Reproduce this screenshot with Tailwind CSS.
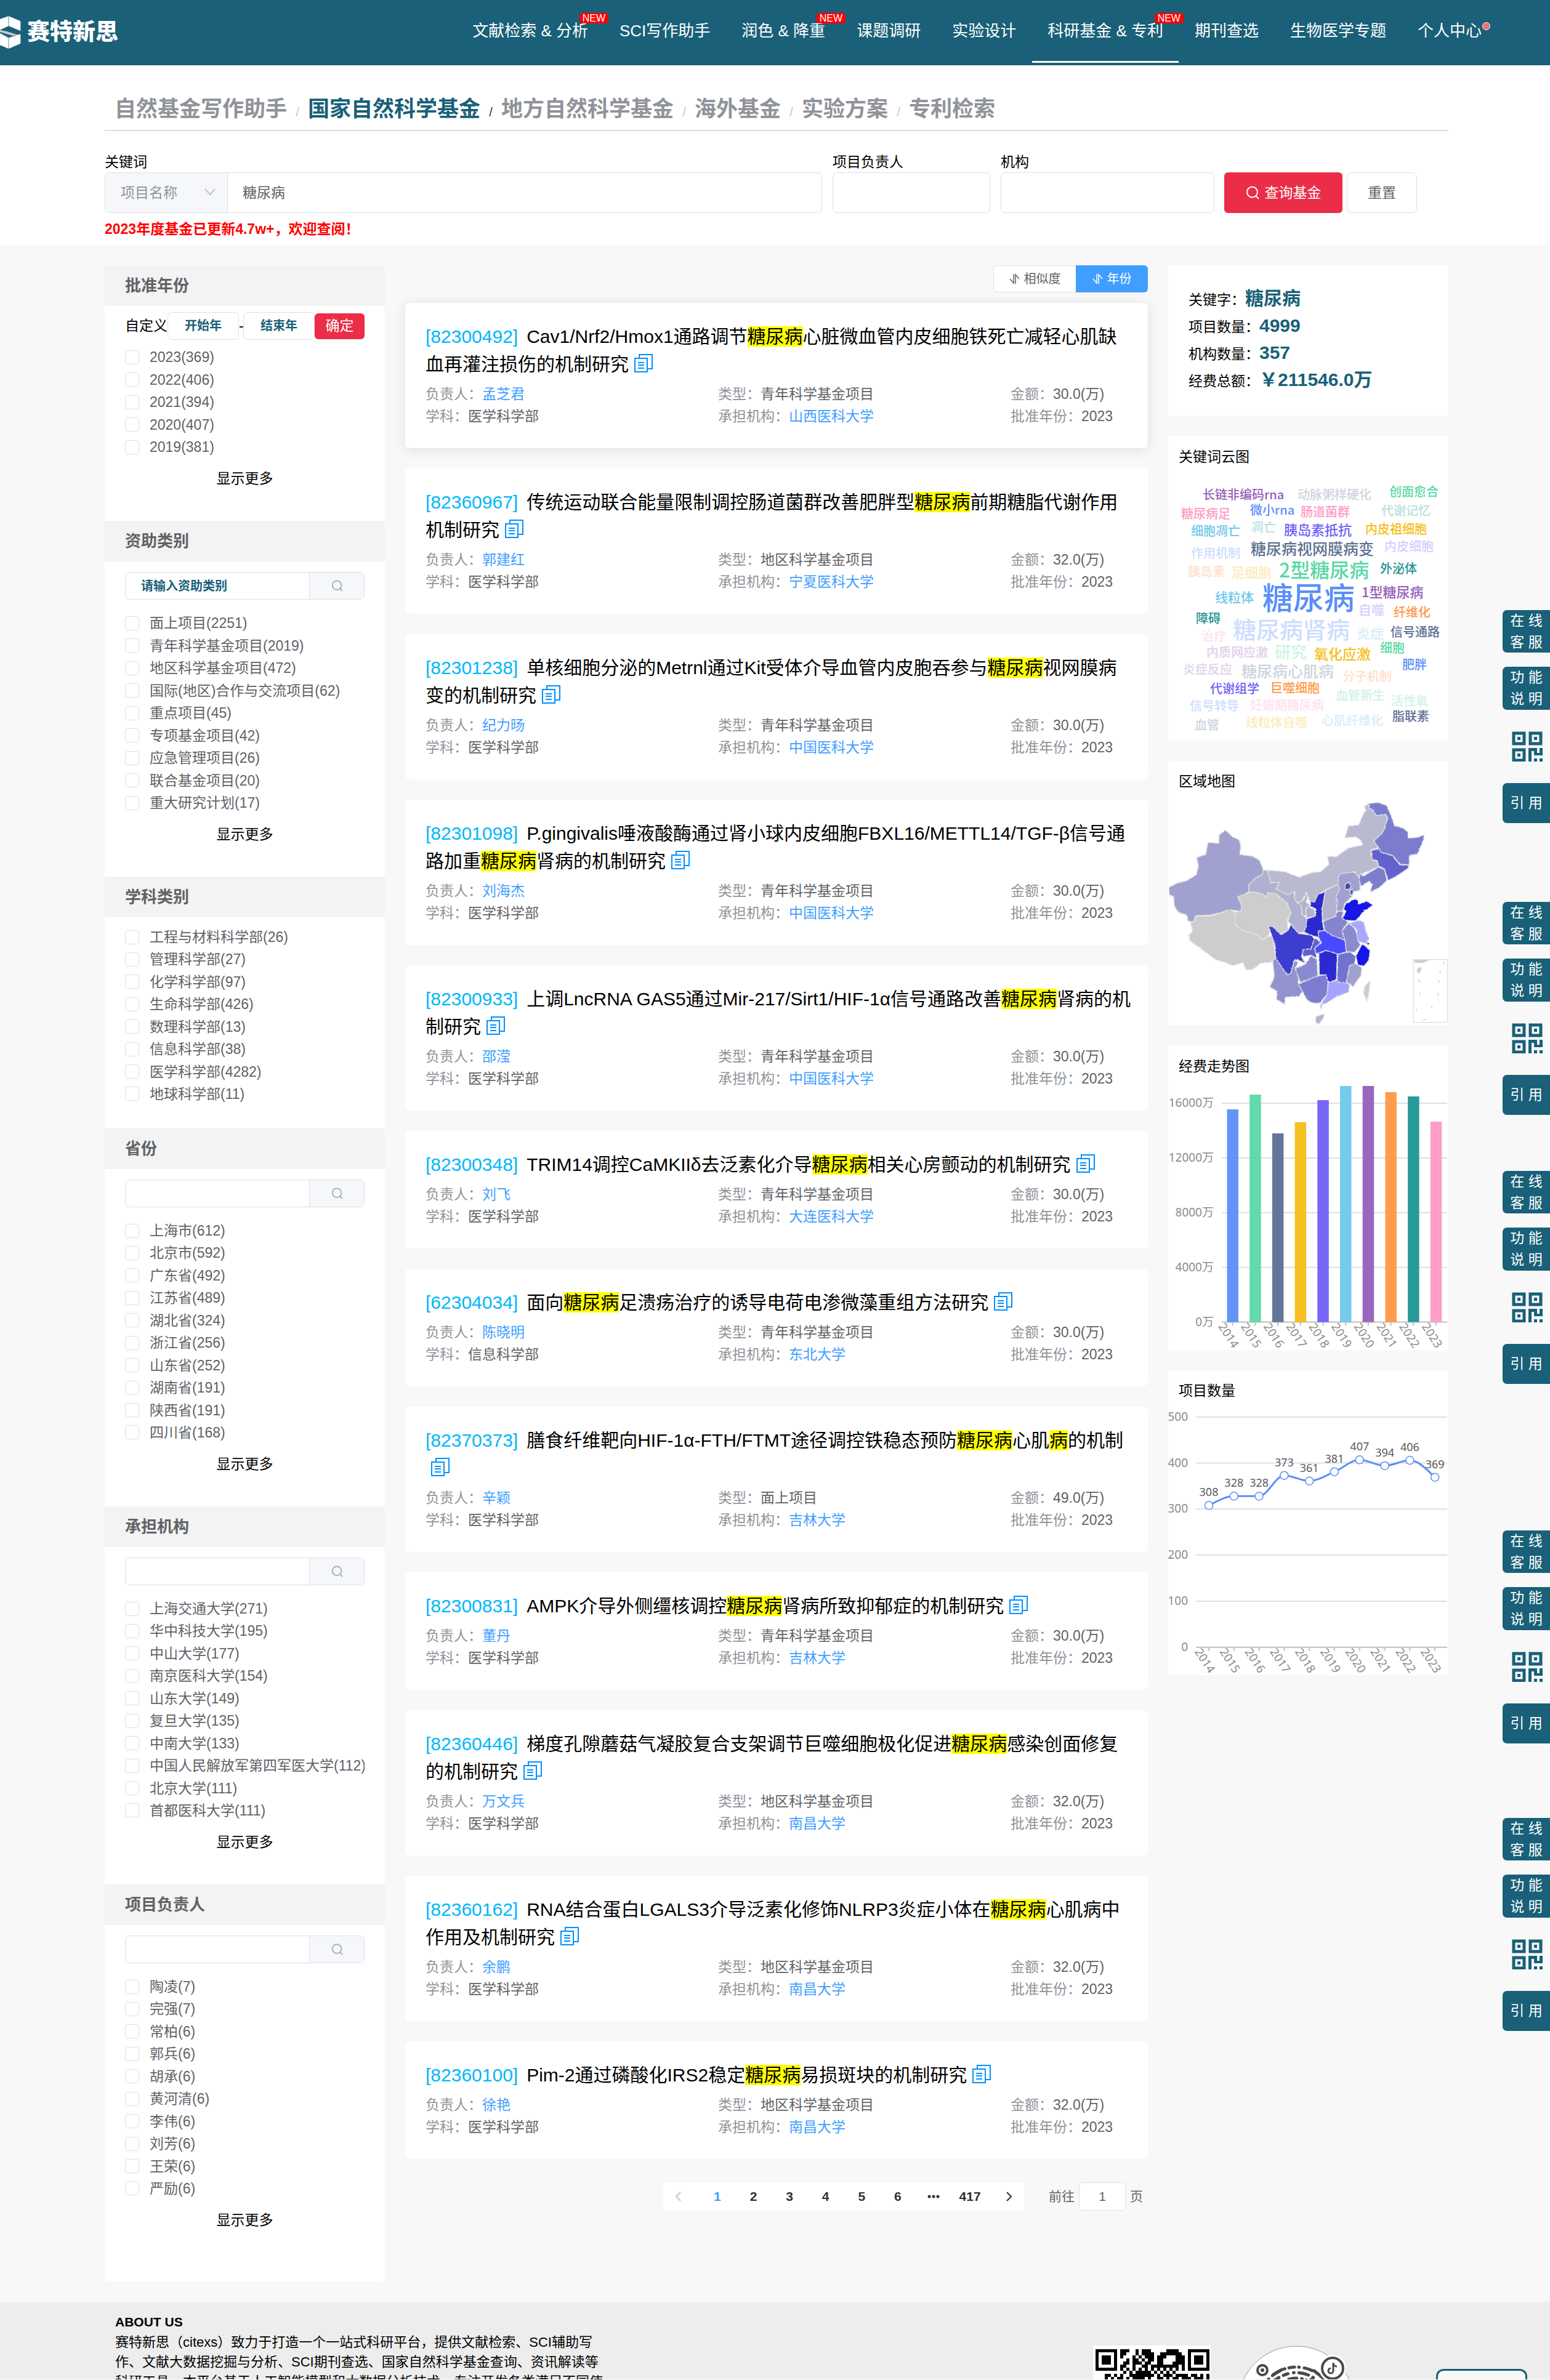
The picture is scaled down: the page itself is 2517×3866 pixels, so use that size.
<!DOCTYPE html>
<html lang="zh-CN">
<head>
<meta charset="utf-8">
<meta name="viewport" content="width=device-width, initial-scale=1">
<title>国家自然科学基金 - 赛特新思</title>
<script src="https://cdn.jsdelivr.net/npm/@tailwindcss/browser@4"></script>
</head>
<body class="relative overflow-x-hidden bg-[#f8f8f8] font-['Liberation_Sans','Noto_Sans_CJK_SC',sans-serif] text-[23px] text-black">

<header class="flex h-[106px] items-stretch justify-between bg-[#196078] pr-[86px] text-white">
  <a href="#" class="flex items-center gap-[10px] text-[37px] font-black leading-[40px]">
    <svg class="h-[54px] w-[34px] shrink-0" viewBox="0 0 102 162" aria-hidden="true">
      <path d="M0 15 41 1v48L0 68zM43 1l57 24v48L43 49z" fill="#fff"/>
      <path d="M0 68 100 88 100 134 43 159V106L0 92z" fill="#fff"/>
      <path d="M0 68 43 52 85 74 100 78v10L43 106 0 84z" fill="#196078"/>
      <path d="M0 68 36 76 88 92 62 96 0 78z" fill="#c9cdd0"/>
      <path d="M0 92 41 106v53L0 142z" fill="#fff"/>
    </svg>
    <span class="whitespace-nowrap">赛特新思</span>
  </a>
  <nav id="nav" class="flex gap-px text-[26px] leading-[100px]"></nav>
</header>

<section class="bg-white pt-[45px] pr-[165px] pl-[170px]">
  <nav id="crumbs" class="flex h-[62px] border-b-2 border-[#d9dfe3] pl-[16px] text-[35px] leading-[52px] font-bold whitespace-nowrap text-[#909399]"></nav>
  <form class="flex items-end pt-[33px] pr-[51px]">
    <div class="min-w-0 flex-1">
      <label for="kw" class="block leading-[34px]">关键词</label>
      <div class="flex h-[66px] overflow-hidden rounded-[7px] border border-[#dcdfe6]">
        <div class="relative w-[199px] shrink-0 border-r border-[#dcdfe6] bg-[#f5f7fa]">
          <select aria-label="检索字段" class="h-full w-full appearance-none pl-[25px] text-[#909399]"><option>项目名称</option></select>
          <svg class="pointer-events-none absolute top-[24px] right-[18px] h-[14px] w-[20px]" viewBox="0 0 20 14" fill="none" stroke="#c0c4cc" stroke-width="2"><path d="M2 2 10 11 18 2"/></svg>
        </div>
        <input id="kw" value="糖尿病" class="min-w-0 flex-1 px-[24px] text-[#606266]">
      </div>
    </div>
    <div class="ml-[17px] w-[256px]">
      <label for="leader" class="block leading-[34px]">项目负责人</label>
      <input id="leader" class="block h-[66px] w-full rounded-[7px] border border-[#dcdfe6]">
    </div>
    <div class="ml-[17px] w-[347px]">
      <label for="org" class="block leading-[34px]">机构</label>
      <input id="org" class="block h-[66px] w-full rounded-[7px] border border-[#dcdfe6]">
    </div>
    <button type="button" class="ml-[16px] flex h-[66px] w-[192px] items-center justify-center gap-[9px] rounded-[6px] bg-[#eb2d47] text-white">
      <svg class="h-[22px] w-[22px]" viewBox="0 0 22 22" fill="none" stroke="currentColor" stroke-width="2"><circle cx="10.500" cy="10" r="8.500"/><path d="m16 16 5 5"/></svg>查询基金</button>
    <button type="button" class="ml-[7px] h-[66px] w-[114px] rounded-[7px] border border-[#dcdfe6] bg-white text-[#606266]">重置</button>
  </form>
  <p class="leading-[52px] font-bold text-[#ff0000]">2023年度基金已更新4.7w+，欢迎查阅！</p>
</section>

<main class="flex items-start gap-[33px] pt-[33px] pr-[165px] pb-[33px] pl-[170px]">
  <aside id="filters" class="w-[455px] shrink-0 overflow-hidden rounded-b-[7px] bg-white pb-[31px]"></aside>

  <div class="min-w-0 flex-1">
    <div class="mb-[17px] flex h-[44px] justify-end text-[20px]">
      <button type="button" class="flex w-[134px] items-center justify-center gap-[7px] rounded-l-[6px] border border-r-0 border-[#dcdfe6] bg-white text-[#606266]">
        <svg class="h-[18px] w-[17px]" viewBox="0 0 17 18" fill="none" stroke="currentColor" stroke-width="1.500"><path d="M7 1v15L1 9M10 17V2l6 7"/></svg>相似度</button>
      <button type="button" class="flex w-[117px] items-center justify-center gap-[7px] rounded-r-[6px] bg-[#409eff] text-white">
        <svg class="h-[18px] w-[17px]" viewBox="0 0 17 18" fill="none" stroke="currentColor" stroke-width="1.500"><path d="M7 1v15L1 9M10 17V2l6 7"/></svg>年份</button>
    </div>
    <div id="results" class="flex flex-col gap-[33px]"></div>
    <nav aria-label="分页" class="mt-[38px] flex h-[46px] items-center justify-end pr-[8px] text-[21px] text-[#606266]">
      <div class="grid h-full w-[586px] grid-cols-10 items-center bg-white font-bold text-[#303133]">
        <button type="button" aria-label="上一页" class="flex justify-start pl-[19px] text-[#c0c4cc]"><svg class="h-[16px] w-[10px]" viewBox="0 0 10 16" fill="none" stroke="currentColor" stroke-width="2"><path d="M9 1 2 8l7 7"/></svg></button>
        <button type="button" class="text-[#409eff]">1</button>
        <button type="button">2</button>
        <button type="button">3</button>
        <button type="button">4</button>
        <button type="button">5</button>
        <button type="button">6</button>
        <button type="button" aria-label="更多页" class="flex justify-center"><svg class="h-[6px] w-[20px]" viewBox="0 0 20 6" fill="currentColor"><circle cx="3" cy="3" r="2.500"/><circle cx="10" cy="3" r="2.500"/><circle cx="17" cy="3" r="2.500"/></svg></button>
        <button type="button">417</button>
        <button type="button" aria-label="下一页" class="flex justify-end pr-[19px]"><svg class="h-[16px] w-[10px]" viewBox="0 0 10 16" fill="none" stroke="currentColor" stroke-width="2"><path d="m1 1 7 7-7 7"/></svg></button>
      </div>
      <label for="page" class="ml-[40px]">前往</label>
      <input id="page" value="1" class="mx-[7px] h-[46px] w-[76px] rounded-[6px] border border-[#dcdfe6] bg-white text-center">
      <span>页</span>
    </nav>
  </div>

  <aside class="flex w-[455px] shrink-0 flex-col">
    <dl class="h-[244px] bg-white pt-[31px] pl-[33px] leading-[45px]">
      <div class="flex h-[44px] items-baseline"><dt>关键字：</dt><dd class="text-[30px] font-bold text-[#196078]">糖尿病</dd></div>
      <div class="flex h-[44px] items-baseline"><dt>项目数量：</dt><dd class="text-[30px] font-bold text-[#196078]">4999</dd></div>
      <div class="flex h-[44px] items-baseline"><dt>机构数量：</dt><dd class="text-[30px] font-bold text-[#196078]">357</dd></div>
      <div class="flex h-[44px] items-baseline"><dt>经费总额：</dt><dd class="text-[30px] font-bold text-[#196078]">￥211546.0万</dd></div>
    </dl>
    <section class="mt-[33px] bg-white">
      <h2 class="h-[64px] pt-[16px] pl-[17px] leading-[36px]">关键词云图</h2>
      <svg id="cloud" class="block w-full font-['Noto_Sans_CJK_SC',sans-serif] font-medium" viewBox="0 64 455 431" role="img" aria-label="关键词云图"></svg>
    </section>
    <section class="mt-[33px] bg-white">
      <h2 class="h-[54px] pt-[15px] pl-[17px] leading-[36px]">区域地图</h2>
      <svg id="map" class="block w-full" viewBox="21 0 1365 1125" role="img" aria-label="区域地图">
        <defs><filter id="coast" x="0" y="0" width="1" height="1"><feTurbulence type="fractalNoise" baseFrequency="0.16" numOctaves="3" seed="4"/><feDisplacementMap in="SourceGraphic" scale="9" xChannelSelector="R" yChannelSelector="G"/></filter></defs>
      </svg>
    </section>
    <section class="mt-[34px] bg-white">
      <h2 class="h-[51px] pt-[15px] pl-[17px] leading-[36px]">经费走势图</h2>
      <svg id="bars" class="block w-full font-['Noto_Sans','Noto_Sans_CJK_SC',sans-serif]" viewBox="0 51 455 443" role="img" aria-label="经费走势图"></svg>
    </section>
    <section class="mt-[33px] bg-white">
      <h2 class="h-[51px] pt-[15px] pl-[17px] leading-[36px]">项目数量</h2>
      <svg id="line" class="block w-full font-['Noto_Sans',sans-serif]" viewBox="0 51 455 444" role="img" aria-label="项目数量"></svg>
    </section>
  </aside>
</main>

<footer class="flex h-[126px] items-start overflow-hidden bg-[#ededed] pr-[312px] pl-[187px]">
  <div class="w-[792px] pt-[16px] text-[22px] leading-[32px]">
    <h2 class="text-[21px] leading-[34px] font-bold">ABOUT US</h2>
    <p>赛特新思（citexs）致力于打造一个一站式科研平台，提供文献检索、SCI辅助写作、文献大数据挖掘与分析、SCI期刊查选、国家自然科学基金查询、资讯解读等科研工具。本平台基于人工智能模型和大数据分析技术，专注开发各类满足不同使</p>
  </div>
  <div class="ml-auto flex gap-[43px] pt-[71px]">
    <svg id="qr" class="h-[191px] w-[191px] bg-white" viewBox="0 0 191 191" role="img" aria-label="微信二维码"></svg>
    <svg class="h-[191px] w-[196px]" viewBox="0 0 196 191" role="img" aria-label="抖音二维码">
      <circle cx="96" cy="96" r="95" fill="#fff" stroke="#999"/>
      <g fill="none" stroke="#4a4a4a" stroke-width="5" stroke-linecap="round">
        <circle cx="96" cy="96" r="61" stroke-dasharray="9 7 1 8 14 8 1 7"/>
        <circle cx="96" cy="96" r="52" stroke-dasharray="1 8 16 8 1 9 8 9"/>
        <circle cx="96" cy="96" r="43" stroke-dasharray="13 8 1 7 1 8"/>
        <circle cx="96" cy="96" r="34" stroke-dasharray="1 7 10 8"/>
        <circle cx="96" cy="96" r="25" stroke-dasharray="6 7"/>
        <path d="m59 47 14-8M58 58l10-6M125 41l10 8M120 55l8 5"/>
      </g>
      <circle cx="41" cy="40" r="14" fill="#fff"/><circle cx="41" cy="40" r="8" fill="none" stroke="#4a4a4a" stroke-width="4"/><circle cx="41" cy="40" r="3" fill="#4a4a4a"/>
      <circle cx="155" cy="37" r="22" fill="#fff"/><circle cx="155" cy="37" r="17" fill="none" stroke="#4a4a4a" stroke-width="4"/>
      <path d="M156 28v13a4 4 0 1 1-4-4M156 29c1 4 3 5 6 5" fill="none" stroke="#4a4a4a" stroke-width="3"/>
    </svg>
  </div>
</footer>

<div id="tools" class="absolute top-[991px] right-0 w-[77px] text-white"></div>
<div class="absolute right-[37px] bottom-0 h-[17px] w-[148px] rounded-t-[12px] border-[3px] border-b-0 border-[#196078] bg-[#f8f8f8]"></div>

<script>
const put = (id, html) => document.getElementById(id).insertAdjacentHTML('beforeend', html);

/* top navigation */
put('nav', [['文献检索 & 分析', 1], ['SCI写作助手'], ['润色 & 降重', 1], ['课题调研'], ['实验设计'], ['科研基金 & 专利', 1, 1], ['期刊查选'], ['生物医学专题'], ['个人中心', 2]]
  .map(([t, mark, on]) => `<a href="#" class="relative block h-[102px] px-[25px] whitespace-nowrap ${on ? 'border-b-[3px] border-white' : ''}">${t.replace('&', '&amp;')}${
    mark === 1 ? '<span class="absolute top-[21px] right-[-8px] rounded-[5px] bg-[#ff0000] px-[5px] text-[16px] leading-[17px]">NEW</span>' :
    mark === 2 ? '<span class="absolute top-[36px] right-[11px] h-[13px] w-[13px] rounded-full border border-white bg-[#f56c6c]"></span>' : ''}</a>`).join(''));

put('crumbs', ['自然基金写作助手', '国家自然科学基金', '地方自然科学基金', '海外基金', '实验方案', '专利检索']
  .map((t, i) => `${i ? `<span class="w-[34px] pt-[5px] text-center text-[20px] font-normal ${i === 2 ? 'text-[#303133]' : 'text-[#c0c4cc]'}">/</span>` : ''}<a href="#" class="${i === 1 ? 'text-[#196078]' : ''}">${t}</a>`).join(''));

/* filter sidebar */
const filters = [
  { t: '批准年份', h: 'h-[182px]', years: 1, more: 1, items: '2023(369)|2022(406)|2021(394)|2020(407)|2019(381)' },
  { t: '资助类别', h: 'h-[328px]', search: 1, ph: '请输入资助类别', more: 1, items: '面上项目(2251)|青年科学基金项目(2019)|地区科学基金项目(472)|国际(地区)合作与交流项目(62)|重点项目(45)|专项基金项目(42)|应急管理项目(26)|联合基金项目(20)|重大研究计划(17)' },
  { t: '学科类别', h: 'h-[291px]', items: '工程与材料科学部(26)|管理科学部(27)|化学科学部(97)|生命科学部(426)|数理科学部(13)|信息科学部(38)|医学科学部(4282)|地球科学部(11)' },
  { t: '省份', h: 'h-[364px]', search: 1, more: 1, items: '上海市(612)|北京市(592)|广东省(492)|江苏省(489)|湖北省(324)|浙江省(256)|山东省(252)|湖南省(191)|陕西省(191)|四川省(168)' },
  { t: '承担机构', h: 'h-[364px]', search: 1, more: 1, items: '上海交通大学(271)|华中科技大学(195)|中山大学(177)|南京医科大学(154)|山东大学(149)|复旦大学(135)|中南大学(133)|中国人民解放军第四军医大学(112)|北京大学(111)|首都医科大学(111)' },
  { t: '项目负责人', h: 'h-[364px]', search: 1, more: 1, items: '陶凌(7)|完强(7)|常柏(6)|郭兵(6)|胡承(6)|黄河清(6)|李伟(6)|刘芳(6)|王荣(6)|严励(6)' },
];
const yearInput = t => `<input aria-label="${t}" placeholder="${t}" class="h-[45px] w-[116px] rounded-[7px] border border-[#dcdfe6] text-center text-[20px] font-bold placeholder:text-[#196078]">`;
put('filters', filters.map(f => `<section>
  <h2 class="bg-[#f3f3f3] pl-[33px] text-[26px] leading-[66px] font-bold text-[#606266]">${f.t}</h2>
  <div class="px-[33px] ${f.more ? 'pb-[51px]' : 'pb-[38px]'}">
  ${f.years ? `<div class="flex items-center pt-[10px] pb-[10px] whitespace-nowrap"><span class="w-[69px]">自定义</span>${yearInput('开始年')}<span class="w-[7px] text-center leading-[45px]">-</span>${yearInput('结束年')}<button type="button" class="h-[42px] w-[81px] rounded-[6px] bg-[#eb2d47] text-white">确定</button></div>` : ''}
  ${f.search ? `<div class="mt-[17px] mb-[20px] flex h-[45px] overflow-hidden rounded-[7px] border border-[#dcdfe6]"><input aria-label="${f.t}" placeholder="${f.ph || ''}" class="min-w-0 flex-1 pl-[25px] text-[20px] font-bold placeholder:text-[#196078]"><button type="button" aria-label="搜索${f.t}" class="flex w-[89px] items-center justify-center border-l border-[#dcdfe6] bg-[#f5f7fa]"><svg class="h-[19px] w-[19px]" viewBox="0 0 22 22" fill="none" stroke="#a3a7ae" stroke-width="2"><circle cx="10.500" cy="10" r="8.500"/><path d="m16 16 5 5"/></svg></button></div>` : ''}
  <ul class="flex flex-col justify-between ${f.h} ${!f.years && !f.search ? 'mt-[14px]' : ''}">${f.items.split('|').map(s => `<li><label class="flex items-center gap-[17px] overflow-hidden leading-[36px] whitespace-nowrap text-[#606266]"><input type="checkbox" class="h-[23px] w-[23px] shrink-0 appearance-none rounded-[4px] border border-[#dcdfe6] bg-white">${s}</label></li>`).join('')}</ul>
  ${f.more ? '<button type="button" class="mx-auto mt-[15px] block leading-[36px]">显示更多</button>' : ''}
  </div></section>`).join(''));

/* result cards: code, title (* marks the highlighted word), leader, type, amount, subject, institution */
const K = '*糖尿病*';
const rows = [
  ['82300492', `Cav1/Nrf2/Hmox1通路调节${K}心脏微血管内皮细胞铁死亡减轻心肌缺血再灌注损伤的机制研究`, '孟芝君', '青年科学基金项目', '30.0', '医学科学部', '山西医科大学'],
  ['82360967', `传统运动联合能量限制调控肠道菌群改善肥胖型${K}前期糖脂代谢作用机制研究`, '郭建红', '地区科学基金项目', '32.0', '医学科学部', '宁夏医科大学'],
  ['82301238', `单核细胞分泌的Metrnl通过Kit受体介导血管内皮胞吞参与${K}视网膜病变的机制研究`, '纪力旸', '青年科学基金项目', '30.0', '医学科学部', '中国医科大学'],
  ['82301098', `P.gingivalis唾液酸酶通过肾小球内皮细胞FBXL16/METTL14/TGF-β信号通路加重${K}肾病的机制研究`, '刘海杰', '青年科学基金项目', '30.0', '医学科学部', '中国医科大学'],
  ['82300933', `上调LncRNA GAS5通过Mir-217/Sirt1/HIF-1α信号通路改善${K}肾病的机制研究`, '邵滢', '青年科学基金项目', '30.0', '医学科学部', '中国医科大学'],
  ['82300348', `TRIM14调控CaMKIIδ去泛素化介导${K}相关心房颤动的机制研究`, '刘飞', '青年科学基金项目', '30.0', '医学科学部', '大连医科大学'],
  ['62304034', `面向${K}足溃疡治疗的诱导电荷电渗微藻重组方法研究`, '陈晓明', '青年科学基金项目', '30.0', '信息科学部', '东北大学'],
  ['82370373', `膳食纤维靶向HIF-1α-FTH/FTMT途径调控铁稳态预防${K}心肌*病*的机制`, '辛颖', '面上项目', '49.0', '医学科学部', '吉林大学'],
  ['82300831', `AMPK介导外侧缰核调控${K}肾病所致抑郁症的机制研究`, '董丹', '青年科学基金项目', '30.0', '医学科学部', '吉林大学'],
  ['82360446', `梯度孔隙蘑菇气凝胶复合支架调节巨噬细胞极化促进${K}感染创面修复的机制研究`, '万文兵', '地区科学基金项目', '32.0', '医学科学部', '南昌大学'],
  ['82360162', `RNA结合蛋白LGALS3介导泛素化修饰NLRP3炎症小体在${K}心肌病中作用及机制研究`, '余鹏', '地区科学基金项目', '32.0', '医学科学部', '南昌大学'],
  ['82360100', `Pim-2通过磷酸化IRS2稳定${K}易损斑块的机制研究`, '徐艳', '地区科学基金项目', '32.0', '医学科学部', '南昌大学'],
];
put('results', rows.map(([code, title, who, type, sum, subj, org], i) => `<article class="rounded-[7px] bg-white pt-[32px] pb-[34px] pl-[33px] ${i ? '' : 'shadow-[0_3px_20px_rgba(0,0,0,0.1)]'}">
  <h3 class="pr-[23px] text-[30px] leading-[45px]"><a href="#" class="mr-[14px] text-[#00b7f9]">[${code}]</a>${title.replace(/\*(.+?)\*/g, '<mark class="bg-[#ffff00]">$1</mark>')}<button type="button" aria-label="复制" class="ml-[9px] inline-block h-[30px] w-[30px] align-[-3px]"><svg class="block h-[30px] w-[30px]" viewBox="0 0 30 30" fill="none" stroke="#0090ff" stroke-width="2"><path d="M1 7h20v22H1zM8 7V1h21v23h-8M6 14h10M6 18h10M6 23h10"/></svg></button></h3>
  <dl class="mt-[8px] grid grid-cols-[475fr_475fr_223fr] leading-[36px] whitespace-nowrap text-[#606266]">
    <div class="flex"><dt class="text-[#909399]">负责人：</dt><dd><a href="#" class="text-[#409eff]">${who}</a></dd></div>
    <div class="flex"><dt class="text-[#909399]">类型：</dt><dd>${type}</dd></div>
    <div class="flex"><dt class="text-[#909399]">金额：</dt><dd>${sum}(万)</dd></div>
    <div class="flex"><dt class="text-[#909399]">学科：</dt><dd>${subj}</dd></div>
    <div class="flex"><dt class="text-[#909399]">承担机构：</dt><dd><a href="#" class="text-[#409eff]">${org}</a></dd></div>
    <div class="flex"><dt class="text-[#909399]">批准年份：</dt><dd>2023</dd></div>
  </dl></article>`).join(''));

/* word cloud: word, x, centre y, size, colour */
put('cloud', `长链非编码rna,56,96,20,#945FB9|动脉粥样硬化,210,96,20,#CED4DE|创面愈合,359,91,20,#5AD8A6|糖尿病足,21,127,20,#FF99C3|微小rna,133,121,20,#5B8FF9|肠道菌群,215,124,20,#FF99C3|代谢记忆,346,122,20,#BBDEDE|细胞凋亡,37,155,20,#6DC8EC|凋亡,135,149,20,#BBDEDE|胰岛素抵抗,188,153,22,#6F5EF9|内皮祖细胞,320,152,20,#F6BD16|作用机制,37,191,20,#CDDDFD|糖尿病视网膜病变,134,184,25,#5D7092|内皮细胞,351,180,20,#D3CEFD|胰岛素,32,221,20,#FFE0C7|足细胞,102,222,22,#FCEBB9|2型糖尿病,180,218,32,#5AD8A6|外泌体,344,216,20,#1E9493|线粒体,76,262,21,#6DC8EC|糖尿病,153,263,50,#5B8FF9|1型糖尿病,314,254,22,#945FB9|自噬,309,282,21,#D3CEFD|纤维化,366,287,20,#FF9845|障碍,45,297,20,#1E9493|糖尿病肾病,105,315,38,#CDDDFD|治疗,54,326,20,#FFE0ED|炎症,306,321,22,#D3EEF9|信号通路,361,319,20,#5D7092|内质网应激,62,352,20,#DECFEA|研究,173,351,26,#CDF3E4|氧化应激,237,354,23,#F6BD16|细胞,344,345,20,#5AD8A6|肥胖,380,372,20,#5B8FF9|炎症反应,24,380,20,#DECFEA|糖尿病心肌病,119,383,25,#CED4DE|分子机制,283,391,20,#FFE0C7|代谢组学,68,411,20,#6F5EF9|巨噬细胞,166,410,20,#FF9845|血管新生,272,422,20,#CDF3E4|活性氧,362,431,20,#CDF3E4|信号转导,35,439,20,#CDDDFD|妊娠期糖尿病,133,438,20,#FFE0ED|脂联素,364,456,20,#5D7092|血管,43,470,20,#CED4DE|线粒体自噬,126,466,20,#FCEBB9|心肌纤维化,249,463,20,#D3EEF9`
  .split('|').map(s => s.split(',')).map(([w, x, y, f, c]) => `<text x="${x}" y="${+y + Math.round(f * 0.37)}" font-size="${f}" fill="${c}">${w}</text>`).join(''));

/* province map: fill and outline */
put('map', '<g filter="url(#coast)" stroke="#e3e3e3" stroke-width="4" stroke-linejoin="round">' + [
  ['#a1a1d0', '24,455 60,435 115,420 158,392 168,350 160,308 203,294 215,235 268,240 268,200 300,175 335,208 365,222 375,250 370,294 430,302 465,322 483,365 480,392 445,410 415,440 413,478 360,500 380,545 375,572 320,563 275,578 220,590 155,592 145,622 118,620 112,590 70,575 50,543 48,500 26,490'],
  ['#cdcdcd', '155,595 220,595 275,580 320,563 345,575 350,640 385,665 455,685 480,710 505,695 530,690 538,760 543,800 520,820 475,822 430,855 400,855 385,820 335,835 300,820 250,805 190,760 128,715 122,685 140,670 130,625 148,620'],
  ['#cdcdcd', '360,500 430,475 480,485 497,502 505,480 545,485 600,530 618,575 600,620 605,665 560,680 520,645 512,685 480,710 455,685 385,665 350,640 345,575 375,572 380,545'],
  ['#b0b0d0', '413,478 415,440 445,410 480,392 483,370 505,370 520,430 562,430 548,462 600,490 640,475 635,505 650,530 670,545 672,585 690,600 697,610 692,650 680,672 655,678 618,635 605,620 618,575 600,530 545,485 505,480 497,502 480,485 430,475'],
  ['#b9b9d0', '505,370 590,378 660,405 720,382 765,378 805,340 797,305 840,305 900,262 968,248 960,225 935,208 882,212 900,155 950,150 965,110 985,75 975,62 1000,45 1000,68 1025,85 1035,105 1080,98 1090,115 1075,170 1060,195 1022,228 1045,262 1005,272 1015,320 1040,330 1045,355 970,385 945,405 930,378 860,390 848,440 790,465 750,490 735,525 712,525 695,478 670,525 650,530 635,505 640,475 600,490 548,462 562,430 520,430'],
  ['#b4b4d0', '695,478 700,510 692,525 712,540 692,560 692,595 672,585 670,545 652,530 670,525 685,510'],
  ['#b0b0d0', '700,545 735,565 735,595 695,602 692,570'],
  ['#7b7bcf', '1000,45 1045,40 1085,55 1105,100 1125,155 1165,165 1190,185 1190,215 1235,210 1268,198 1265,225 1235,292 1195,300 1195,345 1150,340 1115,300 1050,280 1045,260 1022,228 1060,195 1075,170 1090,115 1080,98 1035,105 1020,78 1000,68'],
  ['#6262cf', '1050,265 1055,282 1115,300 1150,345 1195,345 1190,362 1155,385 1130,402 1092,420 1075,365 1045,350 1040,325 1015,318 1010,275'],
  ['#7e7ecf', '950,415 958,385 970,400 1045,355 1075,368 1087,420 1050,455 1005,478 1015,440 1000,425 960,450'],
  ['#a1a1d0', '848,440 850,400 862,388 925,378 950,405 955,440 955,470 925,475 915,500 880,535 870,572 840,570 845,525 838,500 855,465'],
  ['#4444a8', '880,462 885,438 900,428 912,450 898,465'],
  ['#5353cf', '905,470 920,463 924,485 910,495'],
  ['#b2b2d0', '785,470 850,440 855,465 838,500 845,525 838,595 775,618 770,560 778,500'],
  ['#2929cf', '750,490 785,475 778,520 770,560 772,620 780,665 752,668 752,698 720,688 680,672 692,650 697,608 738,595 740,560 712,545 712,525 735,525'],
  ['#1919e8', '875,560 885,535 925,512 945,515 950,535 988,522 1020,540 975,570 950,600 935,618 885,615 868,605 888,572'],
  ['#8484cf', '775,620 838,595 842,570 875,572 868,605 898,622 868,665 882,712 820,688 785,670'],
  ['#a8a8ff', '900,628 955,615 975,625 985,670 1000,705 985,730 940,715 940,660'],
  ['#8a8acf', '868,665 900,628 930,655 940,680 945,715 958,735 930,770 888,768 882,712'],
  ['#1919e8', '965,730 985,742 1005,765 998,810 975,838 945,832 935,790'],
  ['#4a4aff', '752,698 755,668 785,665 820,688 882,712 888,768 850,782 790,762 740,778 735,750 768,725'],
  ['#5e5ed0', '680,755 715,755 735,700 765,722 735,750 745,800 715,785 680,792 670,770'],
  ['#3c3cd0', '510,645 530,645 570,685 605,665 618,635 655,678 720,688 733,705 715,755 680,755 670,790 690,825 650,805 635,810 618,875 600,880 545,800 540,730'],
  ['#9393d0', '530,810 545,800 600,880 618,875 635,810 655,820 640,850 655,890 655,920 680,955 660,985 590,990 590,1025 548,1000 552,960 515,940 538,890'],
  ['#8a8ad0', '640,850 690,828 715,788 745,805 750,885 665,918 655,890'],
  ['#7b7bd0', '655,925 750,885 790,880 800,920 795,975 760,1020 715,1015 695,1000 680,970'],
  ['#a5a5ff', '800,918 850,905 905,925 900,965 835,990 790,1020 770,1025 768,1055 762,1030 795,975'],
  ['#2929cf', '755,775 790,762 845,778 840,905 800,918 790,880 757,880'],
  ['#7272d0', '848,780 905,768 935,790 930,825 905,835 890,920 850,915 843,905'],
  ['#a1a1d0', '905,835 930,825 965,845 960,885 920,940 905,925 888,915'],
  ['#b4b4d0', '740,1085 780,1070 778,1090 755,1120 738,1110'],
  ['#cdcdcd', '1005,908 980,935 972,970 990,1010 1000,960'],
].map(([c, p]) => `<polygon fill="${c}" points="${p}"/>`).join('') + `</g>
  <path d="m990 722 13 6-10 7z" fill="#333388"/>
  <rect x="1215" y="806" width="167" height="306" fill="none" stroke="#dedede" stroke-width="4"/>
  <path d="M1217 808h76l-28 14h-40zM1234 850l16-8 6 8-10 20-12 2z" fill="#cdcdcd"/>
  <path d="m1368 818-6 12M1348 860l-4 14M1340 906v14M1338 968l-3 14M1308 1032l-6 8M1276 1096l-12 6M1229 1046v12M1250 966l-2 12M1240 904l5 14" stroke="#cdcdcd" stroke-width="4"/>`);

/* charts */
const years = [2014, 2015, 2016, 2017, 2018, 2019, 2020, 2021, 2022, 2023];
const grid = (labels, x, y0, step) => labels.map((l, i) => {
  const y = y0 + i * step;
  return `<path d="M${x} ${y}H453" stroke="${i === labels.length - 1 ? '#bfbfbf' : '#dfdfdf'}" stroke-width="2"/><text x="${x - 13}" y="${y + 6}" text-anchor="end" font-size="19" fill="#8c8c8c">${l}</text>`;
}).join('');
const xAxis = (x0, step, y) => years.map((t, i) => {
  const x = x0 + i * step;
  return `<path d="M${x} ${y}v6" stroke="#bfbfbf" stroke-width="2"/><text transform="translate(${x - 7} ${y + 22}) rotate(57)" y="6" text-anchor="middle" font-size="19" fill="#8c8c8c">${t}</text>`;
}).join('');
const barColors = ['#5B8FF9', '#5AD8A6', '#5D7092', '#F6BD16', '#6F5EF9', '#6DC8EC', '#945FB9', '#FF9845', '#1E9493', '#FF99C3'];
put('bars', grid(['16000万', '12000万', '8000万', '4000万', '0万'], 87, 93, 88.9) + xAxis(104.7, 36.7, 448.5) +
  [103, 79, 142, 124, 88, 65, 65, 75, 82, 123].map((y, i) => `<rect x="${95.5 + i * 36.7}" y="${y}" width="18.500" height="${448.5 - y}" fill="${barColors[i]}" opacity="0.95"/>`).join(''));

const vals = [308, 328, 328, 373, 361, 381, 407, 394, 406, 369];
const pts = vals.map((v, i) => [66 + i * 40.8, 449.7 - v * 0.748]);
const slope = pts.map((p, i) => {
  if (!i || i === pts.length - 1) return null;
  const a = p[1] - pts[i - 1][1], b = pts[i + 1][1] - p[1];
  return a * b <= 0 ? 0 : 2 * a * b / (a + b);
});
slope[0] = (pts[1][1] - pts[0][1]) * 1.4;
slope[9] = (pts[9][1] - pts[8][1]) * 1.4;
let curve = `M${pts[0]}`;
for (let i = 1; i < pts.length; i++) {
  const [x0, y0] = pts[i - 1], [x1, y1] = pts[i], d = (x1 - x0) / 3;
  curve += `C${x0 + d} ${y0 + slope[i - 1] / 3} ${x1 - d} ${y1 - slope[i] / 3} ${x1} ${y1}`;
}
put('line', grid(['500', '400', '300', '200', '100', '0'], 45, 75.7, 74.8) + xAxis(66, 40.8, 449.7) +
  `<path d="${curve}" fill="none" stroke="#5B8FF9" stroke-width="3"/>` +
  pts.map(([x, y], i) => `<circle cx="${x}" cy="${y}" r="6.500" fill="#fff" stroke="#5B8FF9" stroke-width="1.500"/><text x="${x}" y="${y - 15}" text-anchor="middle" font-size="18" fill="#595959">${vals[i]}</text>`).join(''));

/* floating tool groups */
const tool = 'block w-full rounded-l-[7px] bg-[#196078] text-center text-[23px] leading-[35px] whitespace-nowrap';
put('tools', ['', 'mt-[128px]', 'mt-[91px]', 'mt-[238px]', 'mt-[121px]'].map(m => `<div class="${m}">
  <button type="button" class="${tool} h-[69px]">在 线<br>客 服</button>
  <button type="button" class="${tool} mt-[23px] h-[70px]">功 能<br>说 明</button>
  <svg class="mt-[35px] ml-[15px] block h-[49px] w-[50px]" viewBox="0 0 50 49" role="img" aria-label="二维码"><g fill="none" stroke="#196078" stroke-width="5"><path d="M3 3h17v17H3zM30 3h17v17H30zM3 30h17v17H3z"/></g><path d="M9 9h5v5H9zM36 9h5v5h-5zM9 36h5v5H9zM27 27h14v8h4v-8h5v12H36v-7h-4v17h-5zM36 44h5v5h-5zM45 44h5v5h-5z" fill="#196078"/></svg>
  <button type="button" class="${tool} mt-[35px] h-[65px]">引 用</button></div>`).join(''));

/* QR code, one string per module row */
const qrRows = [
  '1111111011100101110000011110001111111',
  '1000001011000101111001111111001000001',
  '1011101010001010111011100011101011101',
  '1011101000101101011011000011101011101',
  '1011101001101110110011000111101011101',
  '1000001011001001101111111110101000001',
  '1111111010101010101010101010101111111',
  '0000000001010111110101010100000000000',
  '0001101010011111111010111011110110101',
  '0001010110101111010011010110111011101',
  '1010110111001011111011101110101101011',
  '0110101001110110101101110011101011001',
];
put('qr', qrRows.map((r, y) => [...r].map((b, x) => b === '1' ? `<rect x="${4 + x * 5}" y="${6 + y * 5}" width="5" height="5"/>` : '').join('')).join(''));
</script>
</body>
</html>
